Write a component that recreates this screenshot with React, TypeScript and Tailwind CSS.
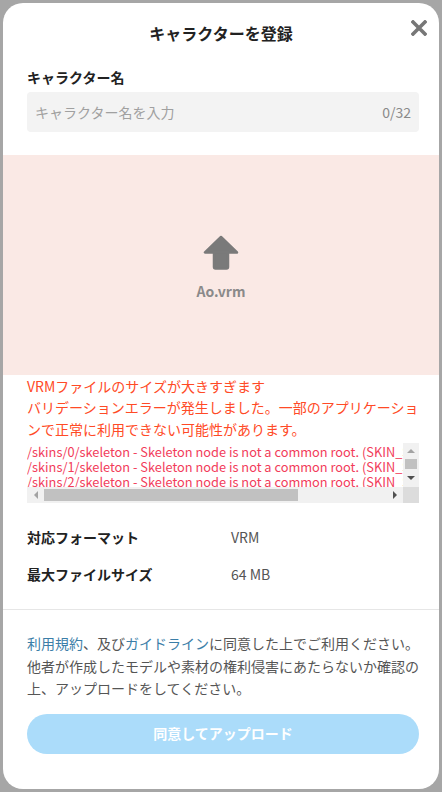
import React from "react";

const font = { fontFamily: '"Noto Sans CJK JP", "Noto Sans", sans-serif' };

function Tri({ dir, color }: { dir: "up" | "down" | "left" | "right"; color: string }) {
  const d =
    dir === "up"
      ? "M0 4 L4 0 L8 4 Z"
      : dir === "down"
      ? "M0 0 L8 0 L4 4 Z"
      : dir === "left"
      ? "M4 0 L4 8 L0 4 Z"
      : "M0 0 L4 4 L0 8 Z";
  const w = dir === "up" || dir === "down" ? 8 : 4;
  const h = dir === "up" || dir === "down" ? 4 : 8;
  return (
    <svg width={w} height={h} viewBox={`0 0 ${w} ${h}`}>
      <path d={d} fill={color} />
    </svg>
  );
}

export default function App() {
  const logs = [0, 1, 2, 3].map(
    (i) => `/skins/${i}/skeleton - Skeleton node is not a common root. (SKIN_SKELETON_INVALID)`
  );
  return (
    <div className="w-[442px] h-[792px] bg-[#a6a6a6] p-[3px] overflow-hidden" style={font}>
      <div className="relative w-[436px] h-[786px] bg-white rounded-[20px] overflow-hidden flex flex-col">
        <button className="absolute right-[12px] top-[17px] w-[16px] h-[16px] flex items-center justify-center">
          <svg width="16" height="16" viewBox="0 0 16 16">
            <path d="M2 2 L14 14 M14 2 L2 14" stroke="#777" strokeWidth="3.6" strokeLinecap="square" />
          </svg>
        </button>
        <h1 className="shrink-0 pt-[18px] text-center text-[16px] leading-[24px] font-bold text-[#222]">
          キャラクターを登録
        </h1>

        <div className="shrink-0 pl-6 pr-5">
          <div className="mt-[22px] text-[14px] leading-[20px] font-bold text-[#222]">キャラクター名</div>
          <div className="mt-[5px] h-[40px] bg-[#f3f3f3] rounded-[4px] flex items-center justify-between pl-[8px] pr-[8px] text-[14px]">
            <span className="text-[#a0a0a0]">キャラクター名を入力</span>
            <span className="text-[#8a8a8a]">0/32</span>
          </div>
        </div>

        <div className="shrink-0 mt-[23px] h-[220px] bg-[#fae9e5] flex flex-col items-center">
          <svg className="mt-[80px]" width="36" height="35" viewBox="0 0 36 35">
            <path
              d="M18 2 L2 17.5 L34 17.5 Z M11 17 L25 17 L25 32 Q25 33.5 23.5 33.5 L12.5 33.5 Q11 33.5 11 32 Z"
              fill="#7a7a7a"
              stroke="#7a7a7a"
              strokeWidth="2.5"
              strokeLinejoin="round"
            />
          </svg>
          <div className="mt-[12px] text-[14px] leading-[18px] font-bold text-[#8a8a8a]">Ao.vrm</div>
        </div>

        <div className="shrink-0 pl-6 pr-5">
          <div className="pt-[0.5px] text-[14px] leading-[21.5px] text-[#ff4a26] whitespace-nowrap">
            <div>VRMファイルのサイズが大きすぎます</div>
            <div>バリデーションエラーが発生しました。一部のアプリケーショ</div>
            <div>ンで正常に利用できない可能性があります。</div>
          </div>
          <div className="mt-[3px] h-[60px] grid grid-cols-[1fr_16px] grid-rows-[44px_16px]">
            <div className="overflow-hidden text-[12.8px] leading-[15px] text-[#f23c5a]">
              <div className="pt-[1px] whitespace-nowrap">
                {logs.map((l) => (
                  <div key={l}>{l}</div>
                ))}
              </div>
            </div>
            <div className="bg-[#f1f1f1] flex flex-col items-center">
              <div className="h-[16px] flex items-center justify-center">
                <Tri dir="up" color="#a3a3a3" />
              </div>
              <div className="h-[10px] w-[12px] bg-[#c1c1c1]" />
              <div className="flex-1 flex items-center justify-center">
                <Tri dir="down" color="#505050" />
              </div>
            </div>
            <div className="bg-[#f1f1f1] flex items-center">
              <div className="w-[17px] h-[16px] flex items-center justify-center">
                <Tri dir="left" color="#a3a3a3" />
              </div>
              <div className="w-[254px] h-[12px] bg-[#c1c1c1]" />
              <div className="flex-1 flex items-center justify-end pr-[6px]">
                <Tri dir="right" color="#505050" />
              </div>
            </div>
            <div className="bg-[#dcdcdc]" />
          </div>

          <div className="mt-[24px] flex text-[14px] leading-[20px]">
            <div className="w-[204px] font-bold text-[#222]">対応フォーマット</div>
            <div className="text-[#555]">VRM</div>
          </div>
          <div className="mt-[17px] flex text-[14px] leading-[20px]">
            <div className="w-[204px] font-bold text-[#222]">最大ファイルサイズ</div>
            <div className="text-[#555]">64 MB</div>
          </div>
        </div>

        <div className="shrink-0 mt-[25px] h-px bg-[#e6e6e6]" />

        <div className="shrink-0 pl-6 pr-5">
          <div className="mt-[22px] text-[14px] leading-[22.5px] text-[#555] whitespace-nowrap">
            <div>
              <span className="text-[#3b7ea8]">利用規約</span>、及び
              <span className="text-[#3b7ea8]">ガイドライン</span>に同意した上でご利用ください。
            </div>
            <div>他者が作成したモデルや素材の権利侵害にあたらないか確認の</div>
            <div>上、アップロードをしてください。</div>
          </div>
          <button className="mt-[14px] w-full h-[40px] rounded-full bg-[#abdcfa] text-white text-[14px] font-bold flex items-center justify-center">
            同意してアップロード
          </button>
        </div>
      </div>
    </div>
  );
}
